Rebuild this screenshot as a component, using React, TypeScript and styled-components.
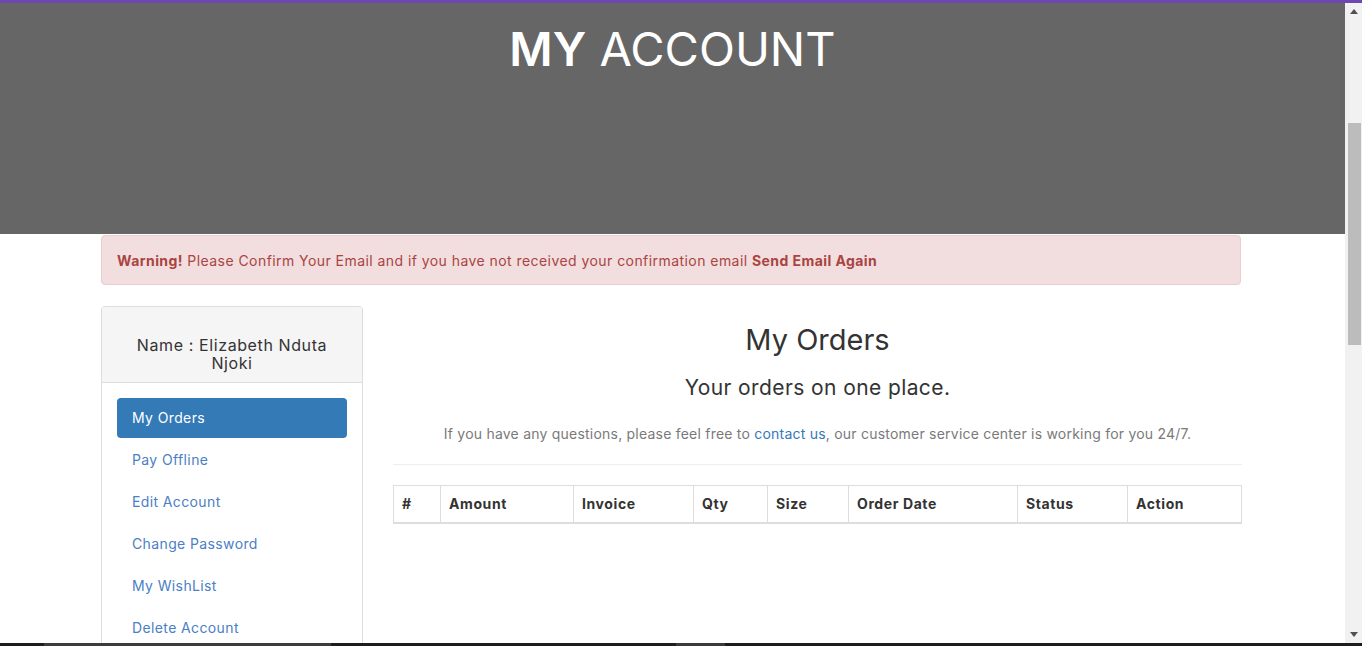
import React from "react";
import styled, { createGlobalStyle } from "styled-components";

const GlobalStyle = createGlobalStyle`
  html, body { margin: 0; padding: 0; overflow: hidden; background: #fff; }
  body { font-family: Inter, "Open Sans", "Liberation Sans", sans-serif; font-size: 14px; color: #333; }
  * { box-sizing: border-box; }
`;

const Frame = styled.div`
  width: 1362px;
  height: 646px;
  display: grid;
  grid-template-rows: 3px 1fr 3px;
  overflow: hidden;
`;

const TopLine = styled.div`
  background: #7046b0;
`;

const Middle = styled.div`
  display: flex;
  min-height: 0;
`;

const Page = styled.div`
  flex: 1;
  overflow: hidden;
`;

const Hero = styled.header`
  height: 231px;
  background: #666666;
  display: flex;
  justify-content: center;
  padding-top: 16px;
`;

const HeroTitle = styled.h1`
  margin: 0;
  color: #fff;
  font-size: 47px;
  font-weight: 400;
  line-height: 60px;
  strong { font-weight: 600; }
`;

const Container = styled.div`
  width: 1140px;
  margin-left: 101px;
`;

const Alert = styled.div`
  margin-top: 1px;
  height: 50px;
  padding: 0 15px;
  display: flex;
  align-items: center;
  background: #f2dede;
  border: 1px solid #ebccd1;
  border-radius: 4px;
  color: #a94442;
  font-size: 14px;
  letter-spacing: 0.44px;
  strong { font-weight: 700; }
`;

const Row = styled.div`
  display: grid;
  grid-template-columns: 262px 1fr;
  column-gap: 30px;
  margin-top: 21px;
  align-items: start;
`;

const Panel = styled.aside`
  border: 1px solid #dddddd;
  border-radius: 4px;
  height: 400px;
`;

const PanelHeading = styled.div`
  background: #f5f5f5;
  border-bottom: 1px solid #dddddd;
  border-radius: 3px 3px 0 0;
  height: 76px;
  padding: 29px 10px 0;
  text-align: center;
  font-size: 16px;
  line-height: 18px;
  letter-spacing: 0.6px;
  color: #333;
`;

const PanelBody = styled.nav`
  padding: 15px;
  display: flex;
  flex-direction: column;
  gap: 2px;
`;

const NavItem = styled.a<{ $active?: boolean }>`
  display: block;
  height: 40px;
  padding: 10px 15px;
  line-height: 20px;
  font-size: 14px;
  letter-spacing: 0.38px;
  border-radius: 4px;
  text-decoration: none;
  color: ${(p) => (p.$active ? "#fff" : "#4a80c4")};
  background: ${(p) => (p.$active ? "#337ab7" : "transparent")};
`;

const Main = styled.section`
  display: flex;
  flex-direction: column;
  align-items: stretch;
  text-align: center;
`;

const Title = styled.h2`
  margin: 17px 0 0;
  font-size: 29px;
  line-height: 34px;
  font-weight: 400;
  color: #333;
`;

const Subtitle = styled.h3`
  margin: 19px 0 0;
  font-size: 21px;
  line-height: 24px;
  letter-spacing: 0.4px;
  font-weight: 400;
  color: #333;
`;

const Para = styled.p`
  margin: 24px 0 0;
  font-size: 14px;
  line-height: 20px;
  letter-spacing: 0.22px;
  color: #7a7a7a;
  a { color: #337ab7; text-decoration: none; }
`;

const Rule = styled.hr`
  margin: 20px 0 0;
  border: 0;
  border-top: 1px solid #eeeeee;
`;

const Table = styled.table`
  margin-top: 20px;
  width: 100%;
  border-collapse: collapse;
  table-layout: fixed;
`;

const Th = styled.th<{ $w: number }>`
  width: ${(p) => p.$w}px;
  text-align: left;
  padding: 8px;
  line-height: 20px;
  font-size: 14px;
  font-weight: 700;
  letter-spacing: 0.6px;
  color: #333;
  border: 1px solid #dddddd;
  border-bottom: 2px solid #dddddd;
`;

const ScrollBar = styled.div`
  width: 17px;
  background: #f1f1f1;
  display: flex;
  flex-direction: column;
  align-items: center;
`;

const ArrowBox = styled.div`
  height: 17px;
  width: 17px;
  display: flex;
  align-items: center;
  justify-content: center;
`;

const ThumbTrack = styled.div`
  flex: 1;
  width: 100%;
  display: flex;
  justify-content: center;
  padding-top: 103px;
`;

const Thumb = styled.div`
  width: 13px;
  height: 222px;
  background: #bcbcbc;
  margin-left: 2px;
`;

const BottomStrip = styled.div`
  background: #1d1d1d;
  display: flex;
`;

const StripSeg = styled.div<{ $w: number; $c: string }>`
  width: ${(p) => p.$w}px;
  background: ${(p) => p.$c};
`;

const columns: [string, number][] = [
  ["#", 47],
  ["Amount", 133],
  ["Invoice", 120],
  ["Qty", 74],
  ["Size", 81],
  ["Order Date", 169],
  ["Status", 110],
  ["Action", 114],
];

const navItems = [
  "My Orders",
  "Pay Offline",
  "Edit Account",
  "Change Password",
  "My WishList",
  "Delete Account",
];

export default function App() {
  return (
    <>
      <GlobalStyle />
      <Frame>
        <TopLine />
        <Middle>
          <Page>
            <Hero>
              <HeroTitle>
                <strong>MY</strong> ACCOUNT
              </HeroTitle>
            </Hero>
            <Container>
              <Alert>
                <span>
                  <strong>Warning!</strong> Please Confirm Your Email and if you have not
                  received your confirmation email <strong>Send Email Again</strong>
                </span>
              </Alert>
              <Row>
                <Panel>
                  <PanelHeading>
                    Name : Elizabeth Nduta
                    <br />
                    Njoki
                  </PanelHeading>
                  <PanelBody>
                    {navItems.map((n, i) => (
                      <NavItem key={n} $active={i === 0} href="#">
                        {n}
                      </NavItem>
                    ))}
                  </PanelBody>
                </Panel>
                <Main>
                  <Title>My Orders</Title>
                  <Subtitle>Your orders on one place.</Subtitle>
                  <Para>
                    If you have any questions, please feel free to <a href="#">contact us</a>,
                    our customer service center is working for you 24/7.
                  </Para>
                  <Rule />
                  <Table>
                    <thead>
                      <tr>
                        {columns.map(([c, w]) => (
                          <Th key={c} $w={w}>
                            {c}
                          </Th>
                        ))}
                      </tr>
                    </thead>
                  </Table>
                </Main>
              </Row>
            </Container>
          </Page>
          <ScrollBar>
            <ArrowBox>
              <svg width="8" height="5" viewBox="0 0 8 5">
                <path d="M0 5 L4 0 L8 5 Z" fill="#505050" />
              </svg>
            </ArrowBox>
            <ThumbTrack>
              <Thumb />
            </ThumbTrack>
            <ArrowBox>
              <svg width="8" height="5" viewBox="0 0 8 5">
                <path d="M0 0 L8 0 L4 5 Z" fill="#505050" />
              </svg>
            </ArrowBox>
          </ScrollBar>
        </Middle>
        <BottomStrip>
          <StripSeg $w={44} $c="#1d1d1d" />
          <StripSeg $w={287} $c="#3c3c3c" />
          <StripSeg $w={345} $c="#1d1d1d" />
          <StripSeg $w={49} $c="#3a3a3a" />
        </BottomStrip>
      </Frame>
    </>
  );
}
